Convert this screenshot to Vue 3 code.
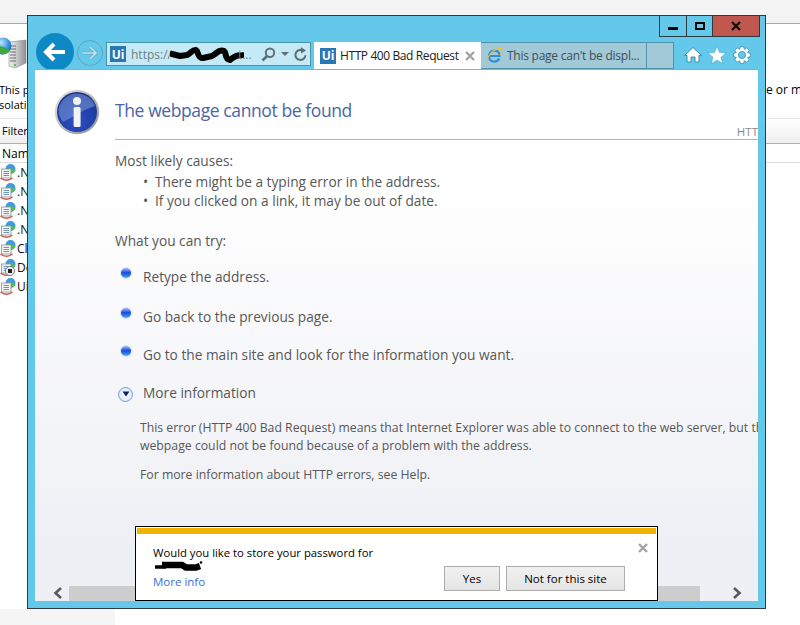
<script setup>
const rows = [
  { id: 1, label: '.N' },
  { id: 2, label: '.N' },
  { id: 3, label: '.N' },
  { id: 4, label: '.N' },
  { id: 5, label: 'Cl' },
  { id: 6, label: 'De', stopped: true },
  { id: 7, label: 'Ui' },
]
const causes = [
  'There might be a typing error in the address.',
  'If you clicked on a link, it may be out of date.',
]
const tries = [
  { text: 'Retype the address.', cls: 'try-a' },
  { text: 'Go back to the previous page.', cls: 'try-b' },
  { text: 'Go to the main site and look for the information you want.', cls: 'try-c' },
]
const gear = (() => {
  const pts = []
  const n = 8
  for (let i = 0; i < n; i++) {
    const a = (i / n) * Math.PI * 2
    const w = Math.PI / n
    const seq = [
      [6.2, a - w * 0.95],
      [8.6, a - w * 0.5],
      [8.6, a + w * 0.5],
      [6.2, a + w * 0.95],
    ]
    for (const [r, t] of seq) {
      pts.push(`${(10 + r * Math.cos(t)).toFixed(2)},${(10 + r * Math.sin(t)).toFixed(2)}`)
    }
  }
  return pts.join(' ')
})()
</script>

<template>
  <div class="stage">
    <!-- application behind the browser -->
    <div class="bg-top"></div>
    <div class="bg-icon">
      <svg width="27" height="33" viewBox="0 0 27 33">
        <defs>
          <linearGradient id="srv" x1="0" x2="1" y1="0" y2="0">
            <stop offset="0" stop-color="#f2f2f2" />
            <stop offset="0.45" stop-color="#c9c9c9" />
            <stop offset="1" stop-color="#8f8f8f" />
          </linearGradient>
          <radialGradient id="globe" cx="0.4" cy="0.3" r="0.8">
            <stop offset="0" stop-color="#bfe6fa" />
            <stop offset="0.6" stop-color="#2f8fd8" />
            <stop offset="1" stop-color="#14569c" />
          </radialGradient>
        </defs>
        <path d="M9 6 L26 4 L26 27 L15 32 L9 30 Z" fill="url(#srv)" stroke="#8c8c8c" stroke-width="0.6" />
        <path d="M10 10h6M10 13h6M10 16h6M10 19h6M10 22h6M10 25h6" stroke="#6f6f6f" stroke-width="1" />
        <rect x="14" y="28" width="2" height="2" fill="#56c43c" />
        <circle cx="3" cy="10" r="8.5" fill="url(#globe)" />
        <path d="M-3 11 C1 9 5 12 10 14 C8 17 5 19 1 18 Z" fill="#3fa83a" />
      </svg>
    </div>
    <div class="bg-desc">
      <div class="bg-desc-left">
        <div>This p</div>
        <div>solati</div>
      </div>
      <div class="bg-desc-right">e or mo</div>
    </div>
    <div class="bg-filter">Filter</div>
    <div class="bg-head">Nam</div>
    <div class="bg-rows">
      <div v-for="r in rows" :key="r.id" class="bg-row">
        <svg class="pool" width="16" height="17" viewBox="0 0 16 17">
          <circle cx="10.5" cy="5" r="5" fill="#3f9ae0" />
          <path d="M8 4 C10 3 13 6 15.5 6 C14.5 9.5 11 10 10 9.5 Z" fill="#4fbf50" />
          <rect x="1.5" y="5" width="9.5" height="9" fill="#f4f4f4" stroke="#8f8f8f" stroke-width="0.8" />
          <path d="M3.5 7.5h5.5M3.5 9.5h5.5M3.5 11.5h5.5" stroke="#6e94ba" stroke-width="1" />
          <path d="M0.5 14 C4 17 9 17 12.5 14" fill="none" stroke="#c9574d" stroke-width="1.3" />
          <template v-if="r.stopped">
            <circle cx="10" cy="12" r="4.6" fill="#ececec" stroke="#666" stroke-width="0.8" />
            <rect x="8" y="10" width="4" height="4" fill="#222" />
          </template>
        </svg>
        <span>{{ r.label }}</span>
      </div>
    </div>
    <div class="bg-foot"><div class="bg-foot-left"></div></div>

    <!-- browser window -->
    <section class="win">
      <div class="caption">
        <button class="cap cap-min"><i></i></button>
        <button class="cap cap-max"><i></i></button>
        <button class="cap cap-close">
          <svg width="12" height="10" viewBox="0 0 12 10"><path d="M2 1 L10 9 M10 1 L2 9" stroke="#111" stroke-width="2.4" /></svg>
        </button>
      </div>

      <div class="nav">
        <div class="back">
          <svg width="24" height="22" viewBox="0 0 24 22"><path d="M11 3 L3 11 L11 19 M3.5 11 H22" fill="none" stroke="#fff" stroke-width="4" stroke-linejoin="miter" /></svg>
        </div>
        <div class="forward">
          <svg width="18" height="16" viewBox="0 0 18 16"><path d="M9 2 L15 8 L9 14 M15 8 H2" fill="none" stroke="#6aa9c0" stroke-width="3" /><path d="M9 2 L15 8 L9 14 M15 8 H2" fill="none" stroke="#bfe6f3" stroke-width="1.6" /></svg>
        </div>
        <div class="addr">
          <span class="ui ui-addr">Ui</span>
          <span class="url">https://</span>
          <svg class="scribble" width="74" height="18" viewBox="0 0 74 18">
            <path d="M2 8 L10 10 L17 9 C21 7 23 3 26 4 C29 6 27 12 33 12 L42 10 C47 7 50 3 54 5 C57 7 54 13 60 14 C63 12 64 9 72 9" fill="none" stroke="#000" stroke-width="6" stroke-linecap="round" stroke-linejoin="round" />
          </svg>
          <span class="url url-tail">t...</span>
          <svg class="addr-ico" width="15" height="15" viewBox="0 0 15 15"><circle cx="9" cy="5.8" r="4.2" fill="none" stroke="#5d6f74" stroke-width="2" /><path d="M6 9 L1.5 13.5" stroke="#5d6f74" stroke-width="2.6" /></svg>
          <span class="drop"></span>
          <svg class="addr-ico refresh" width="15" height="15" viewBox="0 0 15 15"><path d="M12.4 8.2 A5 5 0 1 1 9.6 3.4" fill="none" stroke="#5d6f74" stroke-width="2" /><path d="M8 0.2 L13 3.6 L8 6.6 Z" fill="#5d6f74" /></svg>
        </div>
        <div class="tab tab-on">
          <span class="ui ui-tab">Ui</span>
          <span class="tab-title">HTTP 400 Bad Request</span>
          <svg class="tab-x" width="10" height="10" viewBox="0 0 10 10"><path d="M1 1 L9 9 M9 1 L1 9" stroke="#a3a3a3" stroke-width="2.4" /></svg>
        </div>
        <div class="tab tab-off">
          <svg width="17" height="17" viewBox="0 0 17 17">
            <path d="M2.2 9 H13.6 C13.8 5.6 11.6 3.6 8.6 3.6 C5.2 3.6 3 6.2 3 9.2 C3 12.4 5.2 14.6 8.4 14.6 C10.6 14.6 12.4 13.6 13.4 11.6" fill="none" stroke="#2e8fd4" stroke-width="2.2" />
            <path d="M1.6 15 C-0.2 12 5 4 11 2 C13.6 1 16 1 16 3 C16.4 5 15 7 14 8" fill="none" stroke="#f1bd2f" stroke-width="1.1" />
          </svg>
          <span class="tab-title-off">This page can't be displ...</span>
        </div>
        <div class="tab tab-new"></div>
        <div class="tools">
          <svg width="20" height="20" viewBox="0 0 20 20"><path transform="translate(1 0)" d="M10 2.5 L18.5 10.5 L16 10.5 L16 17 L12 17 L12 12 L8 12 L8 17 L4 17 L4 10.5 L1.5 10.5 Z" fill="#fff" stroke="#3c8cab" stroke-width="1" /></svg>
          <svg width="20" height="20" viewBox="0 0 20 20"><path d="M10 1.5 L12.5 7.6 L19 8 L14 12.2 L15.6 18.6 L10 15.1 L4.4 18.6 L6 12.2 L1 8 L7.5 7.6 Z" fill="#fff" stroke="#4a9ab8" stroke-width="0.5" /></svg>
          <svg width="20" height="20" viewBox="0 0 20 20"><polygon :points="gear" fill="#fff" stroke="#3c8cab" stroke-width="0.8" /><circle cx="10" cy="10" r="3.6" fill="#63c8ea" stroke="#3c8cab" stroke-width="0.8" /></svg>
        </div>
      </div>

      <main class="content">
        <div class="page">
          <header class="head">
            <svg class="info" width="46" height="46" viewBox="0 0 46 46">
              <defs>
                <linearGradient id="rim" x1="0" x2="1" y1="0" y2="1">
                  <stop offset="0" stop-color="#e8e8e8" />
                  <stop offset="1" stop-color="#8e8e8e" />
                </linearGradient>
                <radialGradient id="ball" cx="0.5" cy="0.72" r="0.7">
                  <stop offset="0" stop-color="#2d4fc0" />
                  <stop offset="0.7" stop-color="#1e3ea6" />
                  <stop offset="1" stop-color="#182f86" />
                </radialGradient>
              </defs>
              <circle cx="23" cy="23" r="22.2" fill="url(#rim)" />
              <circle cx="23" cy="23" r="20" fill="url(#ball)" />
              <path d="M4.5 20 A19 19 0 0 1 41 17 C30 20 18 29 9 33 A19 19 0 0 1 4.5 20 Z" fill="#7f9ad8" opacity="0.55" />
              <circle cx="23" cy="12" r="4" fill="#f2f2f2" />
              <rect x="19.6" y="18" width="7" height="20" rx="1.6" fill="#f2f2f2" />
            </svg>
            <div class="head-text">
              <h1>The webpage cannot be found</h1>
              <div class="code">HTT</div>
            </div>
          </header>

          <p class="label label-causes">Most likely causes:</p>
          <ul class="causes">
            <li v-for="c in causes" :key="c">{{ c }}</li>
          </ul>

          <p class="label label-try">What you can try:</p>
          <div v-for="t in tries" :key="t.text" class="try" :class="t.cls">
            <span class="dot"></span>
            <span>{{ t.text }}</span>
          </div>

          <div class="more">
            <span class="more-ico">
              <svg width="8" height="6" viewBox="0 0 8 6"><path d="M0.5 0.5 H7.5 L4 5.5 Z" fill="#0c1c66" /></svg>
            </span>
            <span>More information</span>
          </div>
          <p class="detail detail-a">This error (HTTP 400 Bad Request) means that Internet Explorer was able to connect to the web server, but the<br />webpage could not be found because of a problem with the address.</p>
          <p class="detail detail-b">For more information about HTTP errors, see Help.</p>
        </div>

        <div class="hscroll">
          <svg width="11" height="12" viewBox="0 0 11 12"><path d="M9 1 L3.5 6 L9 11" fill="none" stroke="#5a5a5a" stroke-width="2.6" /></svg>
          <div class="thumb"></div>
          <svg width="11" height="12" viewBox="0 0 11 12"><path d="M2 1 L7.5 6 L2 11" fill="none" stroke="#5a5a5a" stroke-width="2.6" /></svg>
        </div>
      </main>
    </section>

    <!-- password prompt -->
    <aside class="prompt">
      <div class="prompt-bar"></div>
      <div class="prompt-body">
        <div class="prompt-msg">
          <div>Would you like to store your password for</div>
          <svg class="redact" width="52" height="12" viewBox="0 0 52 12">
            <path d="M3 7 H14" fill="none" stroke="#000" stroke-width="3.5" />
            <path d="M10 5 H30 L34 7.5 H44 L48 6" fill="none" stroke="#000" stroke-width="6.5" />
            <circle cx="49" cy="2.5" r="1.3" fill="#000" />
          </svg>
          <a class="more-info">More info</a>
        </div>
        <div class="prompt-side">
          <svg class="prompt-x" width="10" height="10" viewBox="0 0 10 10"><path d="M1 1 L9 9 M9 1 L1 9" stroke="#a3a3a3" stroke-width="2.4" /></svg>
          <div class="prompt-btns">
            <button class="btn btn-yes">Yes</button>
            <button class="btn btn-no">Not for this site</button>
          </div>
        </div>
      </div>
    </aside>
  </div>
</template>

<style scoped>
* { box-sizing: border-box; }
.stage {
  position: relative;
  width: 800px;
  height: 625px;
  overflow: hidden;
  background: #fff;
  display: flex;
  flex-direction: column;
  font-family: "Open Sans", "Noto Sans", sans-serif;
  color: #000;
}
.bg-top {
  height: 24px;
  background: linear-gradient(#f5f5f5, #f2f2f2);
  border-bottom: 1px solid #a9a9a9;
  flex: none;
}
.bg-icon { height: 58px; padding-top: 12px; flex: none; display: flex; }
.bg-desc {
  height: 36px;
  flex: none;
  display: flex;
  justify-content: space-between;
  font-size: 11px;
  line-height: 15px;
}
.bg-desc-left { margin-left: -1px; }
.bg-desc-right { width: 34px; overflow: hidden; white-space: nowrap; font-size: 12px; }
.bg-filter {
  height: 26px;
  flex: none;
  padding: 4px 0 0 2px;
  font-size: 11px;
  border-top: 1px solid #e6e6e6;
  border-bottom: 1px solid #b0b0b0;
  background: linear-gradient(#ffffff, #efefef);
}
.bg-head {
  height: 19px;
  flex: none;
  padding-left: 2px;
  font-size: 12px;
  line-height: 20px;
  border-bottom: 1px solid #dcdcdc;
}
.bg-rows { flex: none; display: flex; flex-direction: column; }
.bg-row {
  height: 19px;
  display: flex;
  align-items: center;
  gap: 1px;
  font-size: 12px;
  color: #111;
}
.pool { flex: none; }
.bg-foot { margin-top: auto; height: 16px; flex: none; }
.bg-foot-left { width: 115px; height: 100%; background: #f5f5f5; }

.win {
  position: absolute;
  left: 27px;
  top: 15px;
  width: 739px;
  height: 594px;
  border: 1px solid #2e3b41;
  background: #63c8ea;
  padding: 0 7px 7px;
  display: flex;
  flex-direction: column;
}
.caption { height: 21px; flex: none; display: flex; justify-content: flex-end; margin-right: -2px; }
.cap {
  padding: 0;
  background: transparent;
  border: 1px solid #2e3b41;
  border-top: 0;
  height: 21px;
  display: flex;
  align-items: center;
  justify-content: center;
}
.cap + .cap { border-left: 0; }
.cap-min { width: 28px; }
.cap-min i { width: 10px; height: 3px; background: #000; margin-top: 5px; display: block; }
.cap-max { width: 26px; }
.cap-max i { width: 10px; height: 8px; border: 2px solid #000; display: block; }
.cap-close { width: 47px; background: #c0584f; }

.nav {
  height: 32px;
  flex: none;
  display: flex;
  align-items: flex-end;
  position: relative;
  color: #222;
}
.back {
  width: 38px;
  height: 38px;
  margin: 0 0 -2px 1px;
  border-radius: 50%;
  background: #0f88c6;
  display: flex;
  align-items: center;
  justify-content: center;
  flex: none;
}
.forward {
  width: 26px;
  height: 26px;
  margin: 0 3px 3px 3px;
  border-radius: 50%;
  border: 1px solid #5ea6c0;
  display: flex;
  align-items: center;
  justify-content: center;
  flex: none;
}
.addr {
  width: 205px;
  height: 24px;
  margin: 0 3px 3px 0;
  background: #c5eaf6;
  border: 1px solid #4b93a9;
  display: flex;
  align-items: center;
  padding-left: 3px;
  flex: none;
}
.ui {
  background: #2a77b4;
  color: #fff;
  font-weight: 700;
  display: flex;
  align-items: center;
  justify-content: center;
  flex: none;
}
.ui-addr { width: 16px; height: 16px; font-size: 12px; }
.url { font-size: 12px; color: #6f7f84; margin-left: 5px; }
.scribble { margin: 2px 0 0 -2px; flex: none; }
.url-tail { margin-left: -6px; color: #6f7f84; }
.addr-ico { flex: none; margin-left: 9px; }
.drop {
  width: 0; height: 0;
  border-left: 4px solid transparent;
  border-right: 4px solid transparent;
  border-top: 4px solid #5d6f74;
  margin-left: 5px;
}
.refresh { margin-left: 4px; }
.tab {
  height: 27px;
  display: flex;
  align-items: center;
  flex: none;
  font-size: 12px;
}
.tab-on { width: 167px; background: #fff; padding-left: 6px; position: relative; z-index: 2; }
.ui-tab { width: 16px; height: 16px; font-size: 12px; margin-right: 4px; }
.tab-title { color: #222; white-space: nowrap; letter-spacing: -0.4px; }
.tab-x { margin-left: auto; margin-right: 6px; }
.tab-off { width: 166px; background: #a2c9d8; border: 1px solid #4f94ab; border-left: 0; padding-left: 5px; gap: 4px; }
.tab-title-off { color: #3c5058; white-space: nowrap; letter-spacing: -0.25px; }
.tab-new { width: 27px; background: #a2c9d8; border: 1px solid #4f94ab; border-left: 0; }
.tools {
  flex: 1;
  display: flex;
  align-self: center;
  justify-content: flex-end;
  gap: 5px;
  margin-top: 3px;
  padding-right: 6px;
}

.content {
  flex: 1;
  min-height: 0;
  background: linear-gradient(#ffffff 0, #ffffff 20%, #eff0f5 88%);
  border-top: 1px solid #84b3c3;
  display: flex;
  flex-direction: column;
  position: relative;
  z-index: 1;
}
.page {
  flex: 1;
  min-height: 0;
  overflow: hidden;
  font-size: 13.7px;
  line-height: 19px;
  color: #575757;
}
.head { display: flex; padding: 0 0 0 19px; height: 70px; }
.info { flex: none; margin: 19px 15px 0 0; }
.head-text { flex: 1; border-bottom: 1px solid #b4b4b4; position: relative; display: flex; flex-direction: column; justify-content: flex-end; }
h1 { margin: 0 0 16px; font-size: 17.5px; line-height: 26px; font-weight: 400; color: #4a66a6; letter-spacing: -0.4px; }
.code { position: absolute; right: 0; bottom: -1px; font-size: 11.5px; line-height: 16px; color: #8a8a8a; }
p { margin: 0; }
.label { padding-left: 80px; }
.label-causes { margin-top: 11px; }
.causes { list-style: none; margin: 2px 0 0; padding: 0 0 0 108px; }
.causes li { display: flex; }
.causes li::before { content: "•"; width: 12px; flex: none; }
.label-try { margin-top: 21px; }
.try { display: flex; align-items: center; padding-left: 86px; height: 19px; }
.try-a { margin-top: 17px; }
.try-b { margin-top: 21px; }
.try-c { margin-top: 19px; }
.dot {
  width: 10px;
  height: 10px;
  border-radius: 50%;
  flex: none;
  margin: -8px 12px 0 0;
  background: linear-gradient(#9fbdf2 0, #2050e0 45%, #1e5fdc 60%, #4fb0ec 100%);
  box-shadow: 0 0 0 1px #d5deef;
}
.more { display: flex; align-items: center; height: 19px; padding-left: 83px; margin-top: 19px; }
.more-ico {
  width: 15px;
  height: 15px;
  border-radius: 50%;
  border: 1px solid #6f9fdc;
  background: radial-gradient(#ffffff, #cfe0f7);
  display: flex;
  align-items: center;
  justify-content: center;
  margin: 3px 10px 0 0;
  flex: none;
}
.detail { padding-left: 105px; white-space: nowrap; font-size: 12.25px; line-height: 18px; }
.detail-a { margin-top: 17px; }
.detail-b { margin-top: 11px; }

.hscroll { height: 16px; flex: none; display: flex; align-items: center; padding: 0 15px 0 17px; }
.thumb { height: 15px; width: 631px; background: #cdcdcd; margin: 0 auto 0 6px; }

.prompt {
  position: absolute;
  left: 135px;
  top: 526px;
  width: 523px;
  height: 75px;
  background: #fff;
  border: 1px solid #000;
  padding: 1px;
  display: flex;
  flex-direction: column;
  z-index: 5;
}
.prompt-bar { height: 6px; background: #f3b200; flex: none; }
.prompt-body { flex: 1; display: flex; justify-content: space-between; }
.prompt-msg { padding: 11px 0 0 16px; font-size: 11.3px; line-height: 16px; color: #000; display: flex; flex-direction: column; align-items: flex-start; }
.redact { margin: -1px 0 0 -1px; flex: none; }
.more-info { color: #3a6fdc; line-height: 17px; font-size: 11.5px; margin-top: 1px; }
.prompt-side { display: flex; flex-direction: column; align-items: flex-end; }
.prompt-x { margin: 9px 8px 0 0; }
.prompt-btns { display: flex; gap: 6px; margin: 13px 31px 0 0; }
.btn {
  height: 25px;
  border: 1px solid #acacac;
  background: linear-gradient(#f0f0f0, #e5e5e5);
  font: inherit;
  font-size: 11.5px;
  padding: 0;
  color: #000;
}
.btn-yes { width: 56px; }
.btn-no { width: 119px; }
</style>
